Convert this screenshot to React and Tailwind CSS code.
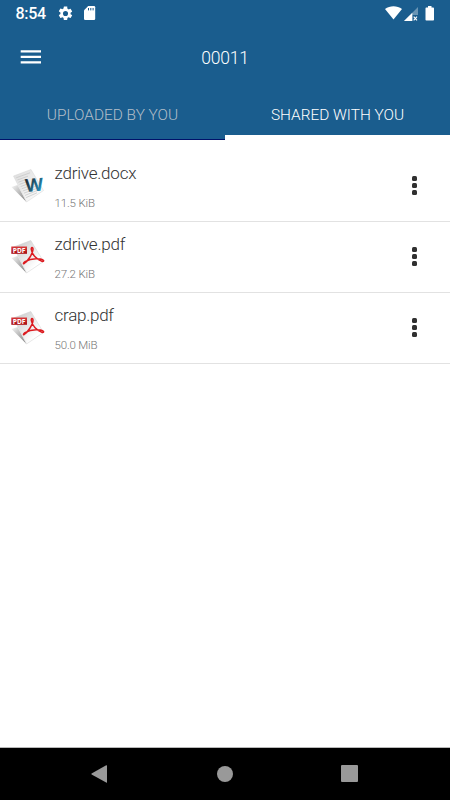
import React, { useState } from 'react';

const files = [
  { name: 'zdrive.docx', size: '11.5 KiB', type: 'docx', width: 82, sizeWidth: 40.5 },
  { name: 'zdrive.pdf', size: '27.2 KiB', type: 'pdf', width: 71, sizeWidth: 40.5 },
  { name: 'crap.pdf', size: '50.0 MiB', type: 'pdf', width: 59.5, sizeWidth: 43 },
];

function DocIcon() {
  return (
    <svg className="w-[34px] h-[36px]" viewBox="0 0 34 36">
      <defs>
        <linearGradient id="doc-page" x1="0" y1="0" x2="1" y2="1">
          <stop offset="0" stopColor="#dcdcdc" />
          <stop offset="1" stopColor="#ffffff" />
        </linearGradient>
        <linearGradient id="doc-shade" x1="0" y1="0" x2="1" y2="1">
          <stop offset="0" stopColor="#f6f6f6" />
          <stop offset="1" stopColor="#7c7c7c" />
        </linearGradient>
        <linearGradient id="doc-w" x1="0" y1="0" x2="1" y2="1">
          <stop offset="0.25" stopColor="#22323c" />
          <stop offset="0.75" stopColor="#2388b4" />
        </linearGradient>
      </defs>
      <path d="M0.5 19L6.5 17L15.5 34Z" fill="url(#doc-shade)" />
      <path d="M2.5 8L20 1.5L32.5 22.5L15.5 34Z" fill="url(#doc-page)" stroke="#d4d4d4" strokeWidth="0.5" />
      <path d="M5.2 9.8L19 4.8M6.3 12L17 8.2M7.4 14.2L15 11.5M8.5 16.4L15 14M9.6 18.6L16 16.2M10.7 20.8L16.5 18.6M11.8 23L27 17.4M12.9 25.2L28 19.6M14 27.4L29 21.4M15.1 29.6L26 24.8" stroke="#c4c4c4" strokeWidth="0.7" />
      <text x="14.2" y="23.2" textLength="18" lengthAdjust="spacingAndGlyphs" fill="url(#doc-w)" transform="rotate(-5 23 16)" className="font-['Open_Sans',sans-serif] font-bold text-[18px]">W</text>
    </svg>
  );
}

function PdfIcon() {
  return (
    <svg className="w-[34px] h-[36px]" viewBox="0 0 34 36">
      <defs>
        <linearGradient id="pdf-page" x1="0" y1="0" x2="1" y2="1">
          <stop offset="0" stopColor="#c4c4c4" />
          <stop offset="0.75" stopColor="#ffffff" />
        </linearGradient>
        <linearGradient id="pdf-shade" x1="0" y1="0" x2="1" y2="1">
          <stop offset="0" stopColor="#f6f6f6" />
          <stop offset="1" stopColor="#777777" />
        </linearGradient>
        <linearGradient id="pdf-label" x1="0" y1="0" x2="0" y2="1">
          <stop offset="0" stopColor="#d8393b" />
          <stop offset="1" stopColor="#a80d12" />
        </linearGradient>
      </defs>
      <path d="M0.5 19L6.5 17L15.5 34Z" fill="url(#pdf-shade)" />
      <path d="M2.5 8L19.8 1.5L32.5 22.5L15.5 34Z" fill="url(#pdf-page)" stroke="#cfcfcf" strokeWidth="0.5" />
      <rect x="0.3" y="7.5" width="15.7" height="7.3" fill="url(#pdf-label)" />
      <text x="1.8" y="13.5" textLength="12.6" lengthAdjust="spacingAndGlyphs" fill="#fff" className="font-['Open_Sans',sans-serif] font-bold text-[6.5px]">PDF</text>
      <path d="M13 24.6C16.8 22.5 21.8 14.5 22 10.5C22 7.7 20 8 20.3 10.5C21 15.5 26 21 31.3 22.4C33.6 22.6 32.8 20.5 29.5 20C24 19.2 17.5 20.5 14 22.6C12.2 23.8 12.2 25 13 24.6Z" fill="none" stroke="#dc1a1f" strokeWidth="1.5" strokeLinejoin="round" />
    </svg>
  );
}

function StatusBar() {
  return (
    <div className="h-[28px] pl-[15px] pr-[15px] flex items-center justify-between text-white">
      <div className="flex items-center">
        <svg className="w-[32px] h-[20px]" viewBox="0 0 32 20">
          <text x="0.5" y="15.2" textLength="30.5" fill="#fff" className="font-[Roboto,sans-serif] font-medium text-[16px]">8:54</text>
        </svg>
        <svg className="ml-[10px] mt-[-2px] w-[17px] h-[17px]" viewBox="0 0 24 24" fill="currentColor">
          <path d="M19.14 12.94c.04-.3.06-.61.06-.94s-.02-.64-.07-.94l2.03-1.58a.49.49 0 0 0 .12-.61l-1.92-3.32a.49.49 0 0 0-.59-.22l-2.39.96a7 7 0 0 0-1.62-.94l-.36-2.54A.48.48 0 0 0 13.92 2h-3.84a.48.48 0 0 0-.48.41l-.36 2.54a7 7 0 0 0-1.62.94l-2.39-.96a.48.48 0 0 0-.59.22L2.72 8.47a.48.48 0 0 0 .12.61l2.03 1.58a7.7 7.7 0 0 0 0 1.88l-2.03 1.58a.49.49 0 0 0-.12.61l1.92 3.32c.12.22.37.29.59.22l2.39-.96c.5.38 1.03.7 1.62.94l.36 2.54c.05.24.24.41.48.41h3.84c.24 0 .44-.17.48-.41l.36-2.54c.59-.24 1.13-.56 1.62-.94l2.39.96c.22.08.47 0 .59-.22l1.92-3.32a.48.48 0 0 0-.12-.61zM12 15.6a3.6 3.6 0 1 1 0-7.2 3.6 3.6 0 0 1 0 7.2z" />
        </svg>
        <svg className="ml-[10px] mt-[-2px] w-[12px] h-[14px]" viewBox="0 0 12 14">
          <path d="M4.2 0H10a1.2 1.2 0 0 1 1.2 1.2v11.6A1.2 1.2 0 0 1 10 14H1.2A1.2 1.2 0 0 1 0 12.8V4.2Z" fill="#fff" />
          <path d="M4.5 2v2.4M6.8 2v2.4M9.1 2v2.4" stroke="#1a5d8e" strokeWidth="1" />
        </svg>
      </div>
      <div className="flex items-center mt-[-2px]">
        <svg className="w-[17px] h-[14px]" viewBox="0 0 17 14">
          <path d="M0 3C5-.8 12-.8 17 3L8.5 13.5Z" fill="#fff" />
        </svg>
        <svg className="ml-[2px] mt-[1px] w-[14px] h-[14px]" viewBox="0 0 14 14">
          <path d="M14 0V8H8.3V14H0Z" fill="#fff" fillOpacity="0.35" />
          <path d="M8.3 5.7V14H0Z" fill="#fff" />
          <path d="M9.7 9.7L13 13.3M13 9.7L9.7 13.3" stroke="#fff" strokeWidth="1.1" />
        </svg>
        <svg className="ml-[7px] mt-[1px] w-[10px] h-[15px]" viewBox="0 0 10 15">
          <path d="M3 0H6.5V1.6H8.2Q9 1.6 9 2.4V13.7Q9 14.5 8.2 14.5H1.3Q.5 14.5 .5 13.7V2.4Q.5 1.6 1.3 1.6H3Z" fill="#fff" />
        </svg>
      </div>
    </div>
  );
}

function FileRow({ file }) {
  return (
    <div className="h-[71px] border-b border-[#e2e2e2] flex items-start pl-[11px] pr-[33px]">
      <div className="mt-[17px]">
        {file.type === 'docx' ? <DocIcon /> : <PdfIcon />}
      </div>
      <svg className="ml-[9px] w-[300px] h-[64px]" viewBox="0 0 300 64">
        <text x="0.5" y="28.4" textLength={file.width} fill="#333" className="font-[Roboto,sans-serif] font-light text-[17px]">{file.name}</text>
        <text x="0.5" y="56" textLength={file.sizeWidth} fill="#777" className="font-[Roboto,sans-serif] font-light text-[11.5px]">{file.size}</text>
      </svg>
      <button className="ml-auto mt-[25px] flex flex-col gap-[2px]" aria-label="More">
        <span className="w-[5px] h-[5px] rounded-[1.5px] bg-[#303030]" />
        <span className="w-[5px] h-[5px] rounded-[1.5px] bg-[#303030]" />
        <span className="w-[5px] h-[5px] rounded-[1.5px] bg-[#303030]" />
      </button>
    </div>
  );
}

function Tab({ label, active, onClick }) {
  return (
    <button
      onClick={onClick}
      className={`relative flex items-center justify-center pt-[3px] text-[15.4px] font-light ${active ? 'text-white' : 'text-[#b4bfc9]'}`}
    >
      {label}
      <span className={`absolute bottom-0 inset-x-0 ${active ? 'h-[5px] bg-white' : 'h-px bg-[#00126a]'}`} />
    </button>
  );
}

export default function App() {
  const [tab, setTab] = useState('shared');

  return (
    <div className="w-[450px] h-[800px] flex flex-col overflow-hidden bg-white font-[Roboto,sans-serif]">
      <header className="bg-[#1a5d8e] text-white">
        <StatusBar />
        {/* Title bar */}
        <div className="h-[60px] grid grid-cols-[1fr_auto_1fr] items-center pl-[20px] pr-[20px]">
          <button className="mt-[-2px] w-[21px]" aria-label="Menu">
            <svg className="w-[21px] h-[14px]" viewBox="0 0 21 14">
              <path d="M.7 1.4H21M.7 6.9H21M.7 12.4H21" stroke="#fff" strokeWidth="2.3" />
            </svg>
          </button>
          <h1 className="font-light text-[17.5px] leading-5 tracking-[-0.25px]">00011</h1>
        </div>
        {/* Tabs */}
        <div className="h-[52px] grid grid-cols-2">
          <Tab label="UPLOADED BY YOU" active={tab === 'uploaded'} onClick={() => setTab('uploaded')} />
          <Tab label="SHARED WITH YOU" active={tab === 'shared'} onClick={() => setTab('shared')} />
        </div>
      </header>
      {/* Files */}
      <main className="flex-1 pt-[11px]">
        {files.map((file) => (
          <FileRow key={file.name} file={file} />
        ))}
      </main>
      {/* Android navigation */}
      <nav className="h-[53px] bg-black border-t border-[#b8b8b8] flex items-center justify-between pl-[91px] pr-[92px] pb-px">
        <svg className="w-[16px] h-[18px]" viewBox="0 0 16 18">
          <path d="M15.2.3Q16 0 16 .8V17.2Q16 18 15.2 17.6L.6 9.5Q0 9 .6 8.5Z" fill="#999" />
        </svg>
        <span className="ml-[2px] w-[16px] h-[16px] rounded-full bg-[#999]" />
        <span className="w-[17px] h-[17px] rounded-[1px] bg-[#999]" />
      </nav>
    </div>
  );
}
